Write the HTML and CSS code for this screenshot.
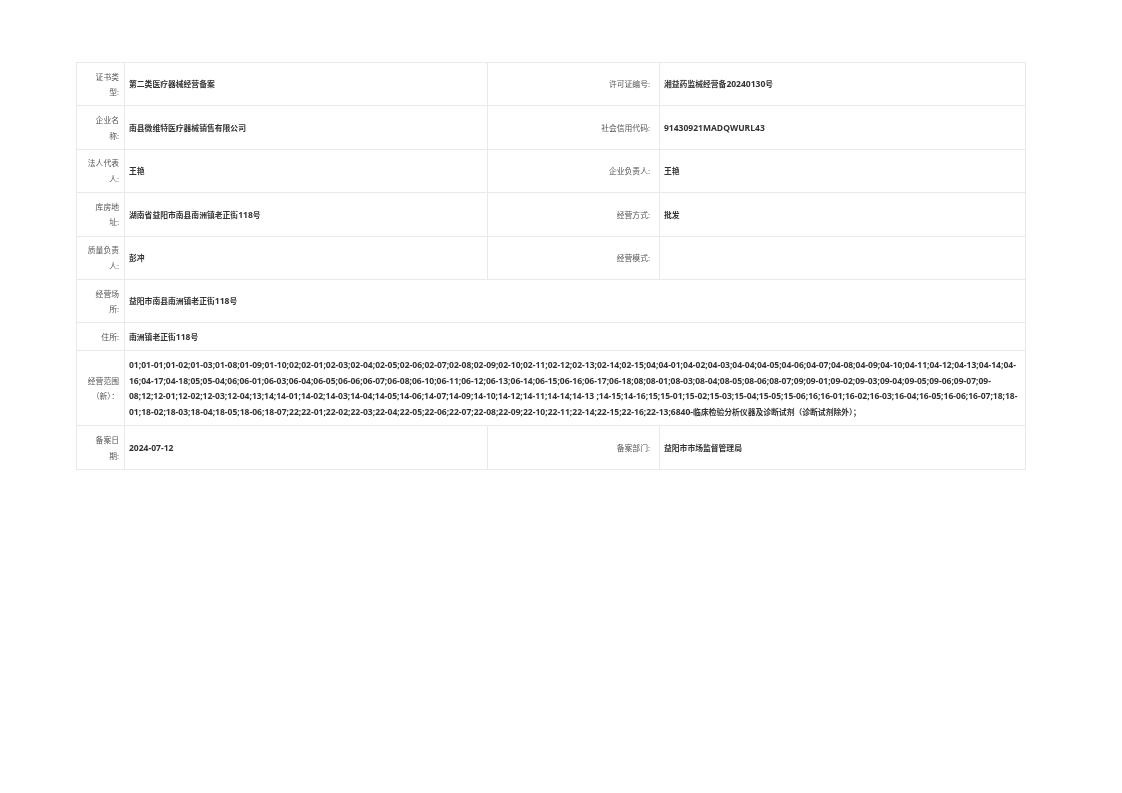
FILE: index.html
```html
<!DOCTYPE html>
<html lang="zh-CN">
<head>
<meta charset="utf-8">
<title>备案信息</title>
<link rel="stylesheet" href="styles.css">
</head>
<body>
<main class="page">
<table class="info">
<colgroup><col class="c1"><col class="c2"><col class="c3"><col class="c4"></colgroup>
<tbody>
<tr class="tall"><th>证书类型:</th><td>第二类医疗器械经营备案</td><th class="wide">许可证编号:</th><td>湘益药监械经营备<span class="num">20240130</span>号</td></tr>
<tr class="tall"><th>企业名称:</th><td>南县微维特医疗器械销售有限公司</td><th class="wide">社会信用代码:</th><td><span class="num">91430921MADQWURL43</span></td></tr>
<tr class="tall"><th>法人代表人:</th><td>王艳</td><th class="wide">企业负责人:</th><td>王艳</td></tr>
<tr class="tall"><th>库房地址:</th><td>湖南省益阳市南县南洲镇老正街<span class="num">118</span>号</td><th class="wide">经营方式:</th><td>批发</td></tr>
<tr class="tall"><th>质量负责人:</th><td>彭冲</td><th class="wide">经营模式:</th><td></td></tr>
<tr class="tall"><th>经营场所:</th><td colspan="3">益阳市南县南洲镇老正街<span class="num">118</span>号</td></tr>
<tr class="short"><th>住所:</th><td colspan="3">南洲镇老正街<span class="num">118</span>号</td></tr>
<tr class="scope"><th>经营范围（新）：</th><td colspan="3"><span class="num">01;01-01;01-02;01-03;01-08;01-09;01-10;02;02-01;02-03;02-04;02-05;02-06;02-07;02-08;02-09;02-10;02-11;02-12;02-13;02-14;02-15;04;04-01;04-02;04-03;04-04;04-05;04-06;04-07;04-08;04-09;04-10;04-11;04-12;04-13;04-14;04-16;04-17;04-18;05;05-04;06;06-01;06-03;06-04;06-05;06-06;06-07;06-08;06-10;06-11;06-12;06-13;06-14;06-15;06-16;06-17;06-18;08;08-01;08-03;08-04;08-05;08-06;08-07;09;09-01;09-02;09-03;09-04;09-05;09-06;09-07;09-08;12;12-01;12-02;12-03;12-04;13;14;14-01;14-02;14-03;14-04;14-05;14-06;14-07;14-09;14-10;14-12;14-11;14-14;14-13 ;14-15;14-16;15;15-01;15-02;15-03;15-04;15-05;15-06;16;16-01;16-02;16-03;16-04;16-05;16-06;16-07;18;18-01;18-02;18-03;18-04;18-05;18-06;18-07;22;22-01;22-02;22-03;22-04;22-05;22-06;22-07;22-08;22-09;22-10;22-11;22-14;22-15;22-16;22-13;6840-</span>临床检验分析仪器及诊断试剂（诊断试剂除外）；</td></tr>
<tr class="tall"><th>备案日期:</th><td><span class="num">2024-07-12</span></td><th class="wide">备案部门:</th><td>益阳市市场监督管理局</td></tr>
</tbody>
</table>
</main>
</body>
</html>
```
FILE: styles.css
```css
html, body {
  margin: 0;
  padding: 0;
  background: #fff;
}
.page {
  padding: 62px 0 0 76px;
}
.info {
  width: 950px;
  table-layout: fixed;
  border-collapse: collapse;
  font-family: "Open Sans", "Noto Sans CJK SC", sans-serif;
  font-size: 7.8px;
  line-height: 15.5px;
  filter: blur(0.3px);
}
.c1 { width: 48px; }
.c2 { width: 363px; }
.c3 { width: 172px; }
.info th, .info td {
  border: 1px solid #e9e9e9;
  vertical-align: middle;
}
.info th {
  padding: 2px 5px 0 9px;
  text-align: right;
  font-weight: 400;
  color: #555;
}
.info th.wide {
  padding-right: 9px;
}
.info td {
  padding: 2px 4px 0;
  font-weight: 600;
  color: #333;
  text-align: left;
}
.num {
  font-size: 8.52px;
  font-weight: 700;
  line-height: 1;
}
.tall { height: 43.4px; }
.short { height: 28px; }
.scope { height: 75px; }
```
